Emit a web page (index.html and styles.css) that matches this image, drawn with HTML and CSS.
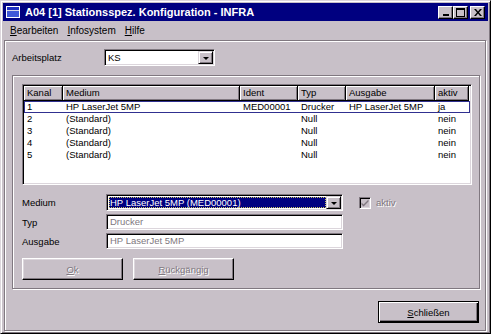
FILE: index.html
```html
<!DOCTYPE html>
<html lang="de">
<head>
  <meta charset="UTF-8">
  <title>A04 [1] Stationsspez. Konfiguration - INFRA</title>
  <link rel="stylesheet" href="styles.css">
</head>
<body>
  <div class="window">
    <!-- Title bar -->
    <div class="titlebar">
      <svg class="app-icon" width="14" height="12" viewBox="0 0 14 12">
        <rect x="0.5" y="0.5" width="13" height="11" fill="#d8d8e8" stroke="#ffffff"/>
        <rect x="1" y="1" width="12" height="3" fill="#2030c0"/>
        <rect x="1" y="5" width="12" height="6" fill="#4058d8"/>
      </svg>
      <span class="title">A04 [1] Stationsspez. Konfiguration - INFRA</span>
      <div class="caption-buttons">
        <span class="cbtn">
          <svg width="8" height="7" viewBox="0 0 8 7"><rect x="1" y="5" width="6" height="2" fill="#000"/></svg>
        </span>
        <span class="cbtn">
          <svg width="9" height="9" viewBox="0 0 9 9"><rect x="0.5" y="0.5" width="8" height="8" fill="none" stroke="#000"/><rect x="0" y="0" width="9" height="2" fill="#000"/></svg>
        </span>
        <span class="cbtn close">
          <svg width="8" height="7" viewBox="0 0 8 7"><path d="M0 0h2l2 2.5 2-2.5h2l-3 3.5 3 3.5h-2l-2-2.5-2 2.5h-2l3-3.5z" fill="#000"/></svg>
        </span>
      </div>
    </div>

    <!-- Menu -->
    <div class="menubar">
      <span><u>B</u>earbeiten</span>
      <span><u>I</u>nfosystem</span>
      <span><u>H</u>ilfe</span>
    </div>

    <div class="client">
      <div class="top-row">
        <span class="top-label">Arbeitsplatz</span>
        <div class="combo small">
          <span class="combo-text">KS</span>
          <span class="drop"><i class="arrow"></i></span>
        </div>
      </div>

      <div class="group">
        <!-- Channel list -->
        <div class="listview">
          <div class="lv-head">
            <span class="c-kanal">Kanal</span>
            <span class="c-medium">Medium</span>
            <span class="c-ident">Ident</span>
            <span class="c-typ">Typ</span>
            <span class="c-ausgabe">Ausgabe</span>
            <span class="c-aktiv">aktiv</span>
          </div>
          <div class="lv-row selected">
            <span class="c-kanal">1</span>
            <span class="c-medium">HP LaserJet 5MP</span>
            <span class="c-ident">MED00001</span>
            <span class="c-typ">Drucker</span>
            <span class="c-ausgabe">HP LaserJet 5MP</span>
            <span class="c-aktiv">ja</span>
          </div>
          <div class="lv-row">
            <span class="c-kanal">2</span>
            <span class="c-medium">(Standard)</span>
            <span class="c-ident"></span>
            <span class="c-typ">Null</span>
            <span class="c-ausgabe"></span>
            <span class="c-aktiv">nein</span>
          </div>
          <div class="lv-row">
            <span class="c-kanal">3</span>
            <span class="c-medium">(Standard)</span>
            <span class="c-ident"></span>
            <span class="c-typ">Null</span>
            <span class="c-ausgabe"></span>
            <span class="c-aktiv">nein</span>
          </div>
          <div class="lv-row">
            <span class="c-kanal">4</span>
            <span class="c-medium">(Standard)</span>
            <span class="c-ident"></span>
            <span class="c-typ">Null</span>
            <span class="c-ausgabe"></span>
            <span class="c-aktiv">nein</span>
          </div>
          <div class="lv-row">
            <span class="c-kanal">5</span>
            <span class="c-medium">(Standard)</span>
            <span class="c-ident"></span>
            <span class="c-typ">Null</span>
            <span class="c-ausgabe"></span>
            <span class="c-aktiv">nein</span>
          </div>
        </div>

        <!-- Detail fields -->
        <div class="field first">
          <span class="field-label">Medium</span>
          <div class="combo wide focused">
            <span class="combo-text"><span class="sel-text">HP LaserJet 5MP (MED00001)</span></span>
            <span class="drop"><i class="arrow"></i></span>
          </div>
          <span class="check disabled">
            <span class="box">
              <svg width="8" height="8" viewBox="0 0 8 8"><path d="M0.5 3.5l2 2 5-5v2l-5 5-2-2z" fill="#807880"/></svg>
            </span>
            <span class="dis-text">aktiv</span>
          </span>
        </div>
        <div class="field">
          <span class="field-label">Typ</span>
          <div class="textbox">Drucker</div>
        </div>
        <div class="field">
          <span class="field-label">Ausgabe</span>
          <div class="textbox">HP LaserJet 5MP</div>
        </div>

        <div class="button-row">
          <button class="btn" disabled><span class="dis-text"><u>O</u>k</span></button>
          <button class="btn" disabled><span class="dis-text"><u>R</u>ückgängig</span></button>
        </div>
      </div>

      <div class="footer">
        <button class="btn default"><u>S</u>chließen</button>
      </div>
    </div>
  </div>
</body>
</html>
```

FILE: styles.css
```css
/* Win9x style dialog */
body {
  margin: 0;
  padding: 0;
  background-color: #c8c0c8;
  font-family: "Liberation Sans", Arial, sans-serif;
  font-size: 9.5px;
  color: #000;
}
.window {
  width: 491px;
  height: 334px;
  box-sizing: border-box;
  background-color: #c8c0c8;
  border: 1px solid;
  border-color: #dcd6dc #000 #000 #dcd6dc;
  box-shadow: inset 1px 1px 0 #fff, inset -1px -1px 0 #807880;
  padding: 2px;
  display: flex;
  flex-direction: column;
}

/* title bar */
.titlebar {
  height: 18px;
  background-color: #000080;
  color: #fff;
  display: flex;
  align-items: center;
  padding: 0 3px 0 2px;
  font-size: 11px;
  font-weight: bold;
}
.app-icon {
  margin: 0 5px 0 1px;
}
.title {
  flex: 1;
  white-space: nowrap;
}
.caption-buttons {
  display: flex;
}
.cbtn {
  width: 15px;
  height: 13px;
  box-sizing: border-box;
  background-color: #c8c0c8;
  border: 1px solid;
  border-color: #fff #000 #000 #fff;
  box-shadow: inset -1px -1px 0 #807880;
  display: flex;
  align-items: center;
  justify-content: center;
}
.cbtn.close {
  margin-left: 2px;
}

/* menu */
.menubar {
  height: 19px;
  display: flex;
  align-items: center;
  gap: 9px;
  padding-left: 7px;
  font-size: 10px;
}

/* client area */
.client {
  flex: 1;
  margin: 0 2px 0 1px;
  border: 1px solid #807880;
  box-shadow: inset 1px 1px 0 #fff, 1px 1px 0 #fff;
  padding: 8px 5px 7px 7px;
  display: flex;
  flex-direction: column;
}
.top-row {
  display: flex;
  align-items: center;
  height: 17px;
}
.top-label {
  width: 92px;
}

/* combo boxes */
.combo {
  height: 17px;
  box-sizing: border-box;
  background-color: #fff;
  border: 1px solid;
  border-color: #807880 #fff #fff #807880;
  box-shadow: inset 1px 1px 0 #000, inset -1px -1px 0 #dcd6dc;
  display: flex;
  align-items: center;
  padding: 2px 2px 2px 2px;
}
.combo.small {
  width: 111px;
}
.combo.wide {
  width: 237px;
}
.combo-text {
  flex: 1;
  height: 100%;
  display: flex;
  align-items: center;
  padding-left: 1px;
}
.focused .combo-text {
  background-color: #000080;
  color: #fff;
  outline: 1px dotted #c8c060;
  outline-offset: -1px;
}
.drop {
  width: 15px;
  height: 13px;
  box-sizing: border-box;
  background-color: #c8c0c8;
  border: 1px solid;
  border-color: #dcd6dc #000 #000 #dcd6dc;
  box-shadow: inset 1px 1px 0 #fff, inset -1px -1px 0 #807880;
  display: flex;
  align-items: center;
  justify-content: center;
  margin-right: -1px;
}
.arrow {
  width: 0;
  height: 0;
  border-left: 3px solid transparent;
  border-right: 3px solid transparent;
  border-top: 3px solid #000;
  margin-top: 1px;
}

/* group frame */
.group {
  margin-top: 9px;
  border: 1px solid #807880;
  box-shadow: inset 1px 1px 0 #fff, 1px 1px 0 #fff;
  padding: 8px 7px 8px 9px;
}

/* list view */
.listview {
  height: 101px;
  box-sizing: border-box;
  background-color: #fff;
  border: 1px solid;
  border-color: #807880 #fff #fff #807880;
  box-shadow: inset 1px 1px 0 #000, inset -1px -1px 0 #dcd6dc;
  padding: 1px;
}
.lv-head {
  display: flex;
  height: 15px;
}
.lv-head span {
  box-sizing: border-box;
  height: 15px;
  line-height: 13px;
  padding-left: 3px;
  background-color: #c8c0c8;
  border-right: 1px solid #000;
  border-bottom: 1px solid #000;
  box-shadow: inset 1px 1px 0 #fff, inset -1px -1px 0 #807880;
}
.lv-row {
  display: flex;
  height: 12px;
  line-height: 12px;
  white-space: nowrap;
}
.lv-row span {
  padding-left: 3px;
  box-sizing: border-box;
}
.lv-row.selected {
  outline: 1px solid #303090;
  outline-offset: -1px;
}
.c-kanal { width: 39px; }
.c-medium { width: 177px; }
.c-ident { width: 58px; }
.c-typ { width: 48px; }
.c-ausgabe { width: 89px; }
.c-aktiv { width: 34px; }

/* detail fields */
.field {
  display: flex;
  align-items: center;
  margin-top: 3px;
}
.field.first {
  margin-top: 9px;
}
.field-label {
  width: 84px;
}
.textbox {
  width: 237px;
  height: 16px;
  box-sizing: border-box;
  background-color: #fff;
  border: 1px solid;
  border-color: #807880 #fff #fff #807880;
  box-shadow: inset 1px 1px 0 #000, inset -1px -1px 0 #dcd6dc;
  color: #807880;
  line-height: 14px;
  padding-left: 3px;
}
.check {
  display: flex;
  align-items: center;
  margin-left: 16px;
}
.check .box {
  width: 12px;
  height: 12px;
  box-sizing: border-box;
  background-color: #c8c0c8;
  border: 1px solid;
  border-color: #807880 #fff #fff #807880;
  box-shadow: inset 1px 1px 0 #000, inset -1px -1px 0 #dcd6dc;
  display: flex;
  align-items: center;
  justify-content: center;
  margin-right: 5px;
}
.dis-text {
  color: #807880;
  text-shadow: 1px 1px 0 #fff;
}

/* buttons */
.button-row {
  display: flex;
  gap: 10px;
  margin-top: 9px;
}
.btn {
  width: 101px;
  height: 22px;
  box-sizing: border-box;
  background-color: #c8c0c8;
  font-family: "Liberation Sans", Arial, sans-serif;
  font-size: 9.5px;
  color: #000;
  border: 1px solid;
  border-color: #fff #000 #000 #fff;
  box-shadow: inset -1px -1px 0 #807880, inset 1px 1px 0 #dcd6dc;
  padding: 0;
}
.btn.default {
  border: 1px solid #000;
  box-shadow: inset 1px 1px 0 #fff, inset -1px -1px 0 #000, inset -2px -2px 0 #807880;
}
.footer {
  margin-top: auto;
  display: flex;
  justify-content: flex-end;
  padding-right: 1px;
}
```
